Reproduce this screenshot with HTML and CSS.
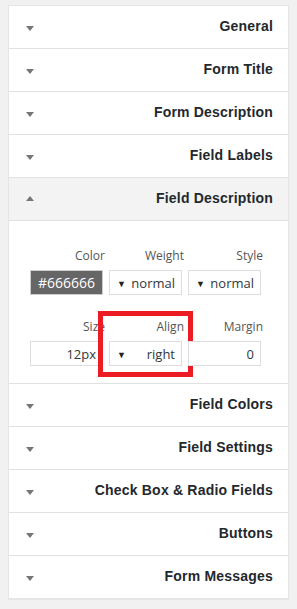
FILE: index.html
```html
<!DOCTYPE html>
<html lang="en">
<head>
    <meta charset="UTF-8">
    <meta name="viewport" content="width=device-width, initial-scale=1.0">
    <title>Form Styles</title>
    <link rel="stylesheet" href="styles.css">
</head>
<body>
    <div class="panel">
        <div class="section"><div class="section-head"><span class="arrow"></span><h3>General</h3></div></div>
        <div class="section"><div class="section-head"><span class="arrow"></span><h3>Form Title</h3></div></div>
        <div class="section"><div class="section-head"><span class="arrow"></span><h3>Form Description</h3></div></div>
        <div class="section"><div class="section-head"><span class="arrow"></span><h3>Field Labels</h3></div></div>
        <div class="section open">
            <div class="section-head"><span class="arrow"></span><h3>Field Description</h3></div>
            <div class="section-body">
                <div class="field-grid">
                    <div class="field">
                        <label>Color</label>
                        <div class="swatch">#666666</div>
                    </div>
                    <div class="field">
                        <label>Weight</label>
                        <div class="select"><span class="caret">&#9660;</span>normal</div>
                    </div>
                    <div class="field">
                        <label>Style</label>
                        <div class="select"><span class="caret">&#9660;</span>normal</div>
                    </div>
                    <div class="field">
                        <label>Size</label>
                        <div class="input">12px</div>
                    </div>
                    <div class="field">
                        <label>Align</label>
                        <div class="select"><span class="caret">&#9660;</span>right</div>
                        <span class="highlight"></span>
                    </div>
                    <div class="field">
                        <label>Margin</label>
                        <div class="input">0</div>
                    </div>
                </div>
            </div>
        </div>
        <div class="section"><div class="section-head"><span class="arrow"></span><h3>Field Colors</h3></div></div>
        <div class="section"><div class="section-head"><span class="arrow"></span><h3>Field Settings</h3></div></div>
        <div class="section"><div class="section-head"><span class="arrow"></span><h3>Check Box &amp; Radio Fields</h3></div></div>
        <div class="section"><div class="section-head"><span class="arrow"></span><h3>Buttons</h3></div></div>
        <div class="section"><div class="section-head"><span class="arrow"></span><h3>Form Messages</h3></div></div>
    </div>
</body>
</html>
```

FILE: styles.css
```css
body {
    margin: 0;
    padding: 5px 8px 10px 8px;
    background-color: #f1f1f1;
    font-family: "Liberation Sans", Arial, sans-serif;
}
.panel {
    width: 279px;
    background-color: #fff;
    border: 1px solid #e5e5e5;
    box-shadow: 0 1px 1px rgba(0,0,0,0.04);
}
.section {
    border-top: 1px solid #e1e1e1;
}
.section:first-child {
    border-top: none;
}
.section-head {
    box-sizing: border-box;
    height: 42px;
    display: flex;
    align-items: center;
    justify-content: space-between;
    padding: 0 15px 2px 17px;
}
.open .section-head {
    background-color: #f3f3f3;
    border-bottom: 1px solid #e1e1e1;
    height: 43px;
}
.section-head h3 {
    margin: 0;
    font-size: 14px;
    font-weight: bold;
    letter-spacing: 0.2px;
    color: #23282d;
}
.arrow {
    width: 0;
    height: 0;
    border-left: 4px solid transparent;
    border-right: 4px solid transparent;
    border-top: 5px solid #72777c;
    margin-top: 4px;
}
.open .arrow {
    border-top: none;
    border-bottom: 5px solid #72777c;
    margin-top: 0;
}
.section-body {
    padding: 27px 26px 17px 21px;
}
.field-grid {
    display: grid;
    grid-template-columns: repeat(3, 75px);
    column-gap: 4px;
    row-gap: 24px;
}
.field {
    position: relative;
    display: flex;
    flex-direction: column;
    align-items: flex-end;
    font-family: "Open Sans", "Noto Sans", sans-serif;
}
.field label {
    font-size: 12px;
    color: #555;
    line-height: 16px;
    margin-bottom: 6px;
}
.swatch, .select, .input {
    box-sizing: border-box;
    width: 73px;
    height: 25px;
    margin-right: 2px;
    display: flex;
    align-items: center;
    justify-content: flex-end;
    padding: 1px 6px 0 7px;
    font-size: 13px;
    color: #32373c;
    border: 1px solid #ddd;
    background-color: #fff;
}
.swatch {
    background-color: #666666;
    border-color: #ccc;
    color: #fff;
    justify-content: center;
    padding: 0;
    font-size: 14px;
}
.select {
    justify-content: space-between;
}
.caret {
    font-size: 9px;
    color: #222;
}
.highlight {
    position: absolute;
    left: -11px;
    top: -8px;
    width: 85px;
    height: 56px;
    border: 5px solid #ed1c24;
}
```
